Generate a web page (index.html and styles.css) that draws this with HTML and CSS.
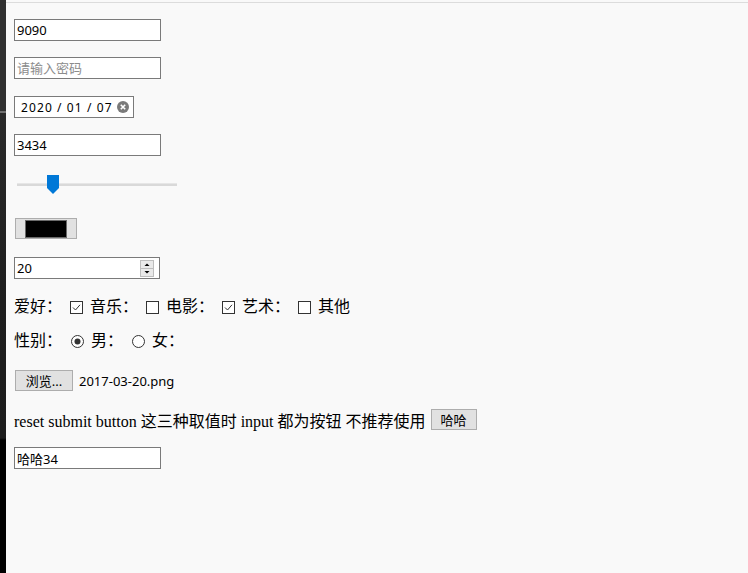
FILE: index.html
```html
<!DOCTYPE html>
<html lang="zh-CN">
<head>
<meta charset="utf-8">
<title>input 类型</title>
<link rel="stylesheet" href="styles.css">
</head>
<body>
<div class="strip"></div>
<main class="page">
  <div class="row r1"><input class="field" type="text" value="9090"></div>
  <div class="row r2"><input class="field" type="password" placeholder="请输入密码"></div>
  <div class="row r3">
    <span class="field date">
      <span class="date-text">2020 / 01 / 07</span>
      <svg class="clear" width="12" height="12" viewBox="0 0 12 12"><circle cx="6" cy="6" r="6" fill="#7a7a7a"/><path d="M3.8 3.8 L8.2 8.2 M8.2 3.8 L3.8 8.2" stroke="#fff" stroke-width="1.6"/></svg>
    </span>
  </div>
  <div class="row r4"><input class="field" type="text" value="3434"></div>
  <div class="row r5">
    <div class="range">
      <div class="track"></div>
      <svg class="thumb" width="12" height="19" viewBox="0 0 12 19"><path d="M0 0 H12 V13 L6 19 L0 13 Z" fill="#0078d7"/></svg>
    </div>
  </div>
  <div class="row r6"><span class="color-btn"><span class="swatch"></span></span></div>
  <div class="row r7">
    <span class="field number">
      <span>20</span>
      <span class="spin">
        <svg width="14" height="17" viewBox="0 0 14 17"><rect x="0.5" y="0.5" width="13" height="16" fill="#e9e9e9" stroke="#bdbdbd"/><line x1="1" y1="8.5" x2="13" y2="8.5" stroke="#bdbdbd"/><path d="M4.5 6 L7 3.5 L9.5 6 Z" fill="#000"/><path d="M4.5 11 L7 13.5 L9.5 11 Z" fill="#000"/></svg>
      </span>
    </span>
  </div>
  <div class="row r8 choices">
    <span class="label">爱好：</span>
    <span class="box"><svg width="13" height="13" viewBox="0 0 13 13"><rect x="0.5" y="0.5" width="12" height="12" fill="#fff" stroke="#333"/><path d="M3 6.5 L5.5 9 L10 3.8" fill="none" stroke="#333" stroke-width="1"/></svg></span>
    <span class="label">音乐：</span>
    <span class="box"><svg width="13" height="13" viewBox="0 0 13 13"><rect x="0.5" y="0.5" width="12" height="12" fill="#fff" stroke="#333"/></svg></span>
    <span class="label">电影：</span>
    <span class="box"><svg width="13" height="13" viewBox="0 0 13 13"><rect x="0.5" y="0.5" width="12" height="12" fill="#fff" stroke="#333"/><path d="M3 6.5 L5.5 9 L10 3.8" fill="none" stroke="#333" stroke-width="1"/></svg></span>
    <span class="label">艺术：</span>
    <span class="box"><svg width="13" height="13" viewBox="0 0 13 13"><rect x="0.5" y="0.5" width="12" height="12" fill="#fff" stroke="#333"/></svg></span>
    <span class="label">其他</span>
  </div>
  <div class="row r9 choices">
    <span class="label">性别：</span>
    <span class="box radio"><svg width="13" height="13" viewBox="0 0 13 13"><circle cx="6.5" cy="6.5" r="6" fill="#fff" stroke="#333"/><circle cx="6.5" cy="6.5" r="3" fill="#333"/></svg></span>
    <span class="label">男：</span>
    <span class="box radio"><svg width="13" height="13" viewBox="0 0 13 13"><circle cx="6.5" cy="6.5" r="6" fill="#fff" stroke="#333"/></svg></span>
    <span class="label">女：</span>
  </div>
  <div class="row r10">
    <span class="btn file-btn">浏览...</span>
    <span class="file-name">2017-03-20.png</span>
  </div>
  <div class="row r11">
    <span class="note">reset submit button 这三种取值时 input 都为按钮 不推荐使用</span>
    <span class="btn haha">哈哈</span>
  </div>
  <div class="row r12"><input class="field" type="text" value="哈哈34"></div>
</main>
</body>
</html>
```

FILE: styles.css
```css
html, body {
  margin: 0;
  padding: 0;
}

body {
  display: flex;
  height: 573px;
  overflow: hidden;
  background: #f9f9f9;
  font-family: "Liberation Serif", "Noto Sans CJK SC", serif;
  font-size: 16px;
  color: #000;
}

.strip {
  width: 6px;
  flex: none;
  background: linear-gradient(to bottom,
    #303030 0, #303030 111px, #707070 111px, #707070 113px,
    #2a2a2a 113px, #1e1e1e 300px, #1c1c1c 438px, #000 440px, #000 100%);
}

.page {
  flex: 1;
  margin-top: 2px;
  border-top: 1px solid #dcdcdc;
  padding-left: 8px;
  display: flex;
  flex-direction: column;
}

.row {
  display: flex;
  align-items: center;
}

.r1 { margin-top: 16px; }
.r2 { margin-top: 16px; }
.r3 { margin-top: 17px; }
.r4 { margin-top: 16px; }
.r5 { margin-top: 18px; height: 20px; }
.r6 { margin-top: 24px; }
.r7 { margin-top: 18px; }
.r8 { margin-top: 18px; height: 20px; }
.r9 { margin-top: 14px; height: 20px; }
.r10 { margin-top: 19px; }
.r11 { margin-top: 18px; height: 21px; }
.r12 { margin-top: 17px; }

.field {
  box-sizing: border-box;
  width: 147px;
  height: 22px;
  margin: 0;
  padding: 0 2px;
  border: 1px solid #7a7a7a;
  border-radius: 0;
  background: #fff;
  font-family: "Noto Sans", "Noto Sans CJK SC", sans-serif;
  font-size: 13px;
  color: #000;
  outline: none;
}

.field::placeholder {
  color: #8c8c8c;
}

.date {
  width: 120px;
  display: flex;
  align-items: center;
  padding: 0 4px 0 6px;
}

.date-text {
  font-size: 12px;
  letter-spacing: 1.1px;
  white-space: pre;
}

.clear {
  margin-left: auto;
  display: block;
}

.range {
  position: relative;
  width: 160px;
  height: 20px;
  margin-left: 3px;
}

.track {
  margin-top: 9px;
  height: 2px;
  background: #d9d9d9;
  border-top: 1px solid #e6e6e6;
}

.thumb {
  position: absolute;
  left: 30px;
  top: 1px;
}

.color-btn {
  box-sizing: border-box;
  width: 62px;
  height: 21px;
  margin-left: 1px;
  padding: 1px 0 0 9px;
  background: #e1e1e1;
  border: 1px solid #adadad;
  display: flex;
  align-items: flex-start;
}

.swatch {
  box-sizing: border-box;
  width: 42px;
  height: 18px;
  background: #000;
  border: 1px solid #6a6a6a;
}

.number {
  width: 146px;
  display: flex;
  align-items: center;
}

.spin {
  margin-left: auto;
  margin-right: 3px;
  display: flex;
}

.spin svg {
  display: block;
}

.choices .label {
  line-height: 20px;
}

.box {
  display: flex;
  margin: 0 7px 0 8px;
}

.box svg {
  display: block;
}

.radio {
  margin: 0 7px 0 9px;
}

.btn {
  box-sizing: border-box;
  height: 21px;
  display: inline-flex;
  align-items: center;
  justify-content: center;
  background: #e1e1e1;
  border: 1px solid #adadad;
  font-family: "Noto Sans", "Noto Sans CJK SC", sans-serif;
  font-size: 13px;
  color: #000;
}

.file-btn {
  width: 58px;
  margin-left: 1px;
}

.file-name {
  margin-left: 6px;
  font-family: "Noto Sans", "Noto Sans CJK SC", sans-serif;
  font-size: 13px;
}

.note {
  white-space: nowrap;
}

.haha {
  width: 46px;
  margin-left: 5px;
}
```
